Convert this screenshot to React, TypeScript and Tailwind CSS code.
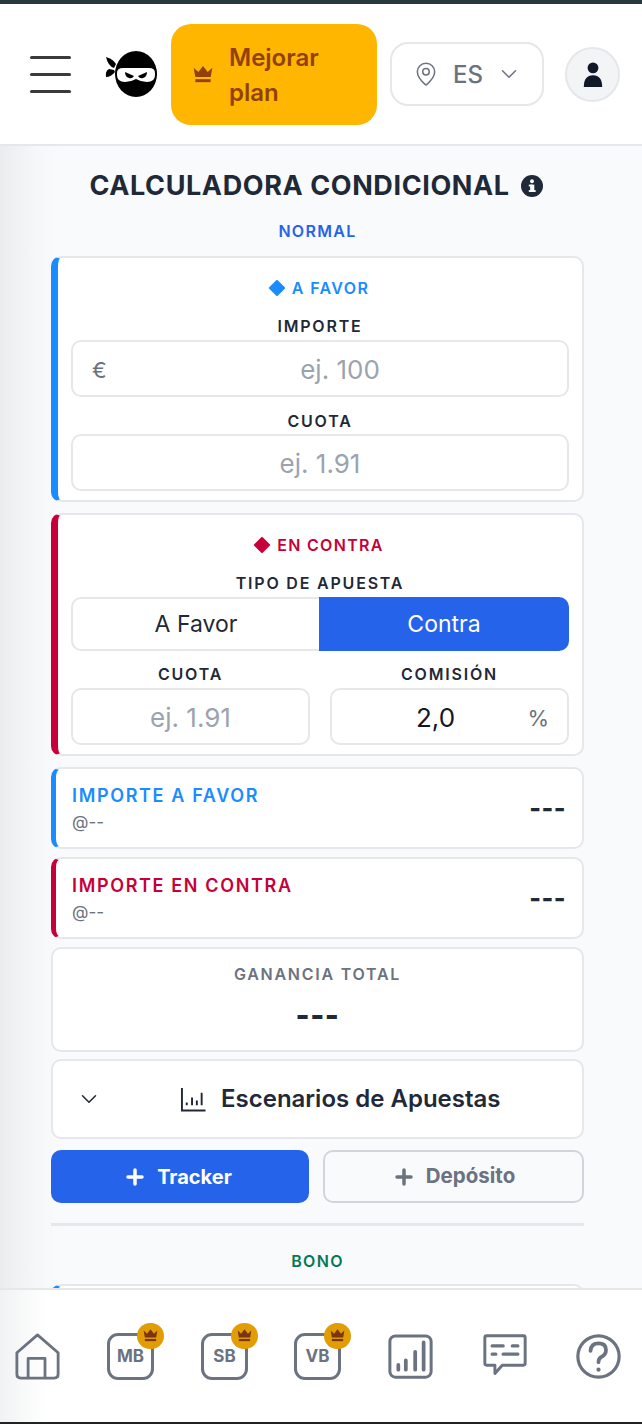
import React from 'react';
import { ChevronDown, MapPin, Plus } from 'lucide-react';

const Crown = ({ className }: { className: string }) => (
  <svg viewBox="0 0 24 20" className={className} fill="currentColor">
    <path d="M1 2l5.5 5L12 0l5.5 7L23 2l-2 11H3z" />
    <rect x="3" y="15.5" width="18" height="3.5" />
  </svg>
);

const Ninja = () => (
  <svg viewBox="0 0 52 48" className="w-[52px] h-[48px] shrink-0">
    <path d="M1 7 Q8 9 11 14 L9 18 Q3 16 1 7 Z" fill="#000" />
    <path d="M9 20 L10 22 Q6 27 1 27 Q0 21 4 19 Z" fill="#000" />
    <ellipse cx="31" cy="24" rx="21" ry="23" fill="#000" />
    <path d="M12 23 Q12 18 18 18 H44 Q50 18 50 23 V25 Q50 32 42 32 Q36 32 31 29 Q26 32 20 32 Q12 32 12 25 Z" fill="#fff" />
    <path d="M20 22 L29 26 Q27 29 24 28 Q20 27 20 22 Z M42 22 L33 26 Q35 29 38 28 Q42 27 42 22 Z" fill="#000" />
  </svg>
);

const Diamond = ({ className }: { className: string }) => (
  <span className={`w-[12px] h-[12px] rotate-45 rounded-[1px] ${className}`} />
);

const Label = ({ children }: { children: React.ReactNode }) => (
  <div className="text-[16px] leading-[20px] font-semibold tracking-[1.8px] text-[#1f2937] text-center">{children}</div>
);

const Field = ({ placeholder, className, children }: { placeholder: string; className?: string; children?: React.ReactNode }) => (
  <div className={`relative h-[57px] rounded-[10px] border-2 border-[#e5e7eb] bg-white flex items-center justify-center pt-[2px] text-[26px] text-[#9ca3af] ${className ?? ''}`}>
    {children}
    {placeholder}
  </div>
);

const ResultCard = ({ title, color }: { title: string; color: string }) => (
  <div className={`h-[82px] rounded-[10px] border-2 border-[#e5e7eb] border-l-[5px] ${color} bg-white flex items-center justify-between pl-[16px] pr-[16px]`}>
    <div>
      <div className="text-[18px] leading-[24px] font-semibold tracking-[1.65px]">{title}</div>
      <div className="text-[17px] leading-[20px] text-[#6b7280] mt-[4px]">@--</div>
    </div>
    <div className="text-[25px] font-extrabold text-[#1f2937] tracking-[0.5px] mt-[2px]">---</div>
  </div>
);

const BadgeTile = ({ text, className }: { text: string; className?: string }) => (
  <div className={`relative w-[47px] h-[47px] rounded-[11px] border-[3px] border-[#6b7280] flex items-center justify-center bg-white ${className ?? ''}`}>
    <span className="text-[17px] font-bold text-[#6b7280] mt-[1px]">{text}</span>
    <span className="absolute -top-[13px] -right-[13px] w-[27px] h-[26px] rounded-full bg-[#e29d05] flex items-center justify-center">
      <Crown className="w-[15px] h-[13px] text-[#78350f]" />
    </span>
  </div>
);

export default function App() {
  return (
    <div className="w-[642px] h-[1424px] flex flex-col overflow-hidden bg-white font-['Inter',sans-serif]">
      <div className="h-[4px] shrink-0 bg-[#27393f]" />

      <header className="h-[142px] shrink-0 bg-white border-b-2 border-[#e5e7eb] flex items-center pl-[30px]">
        <div className="w-[41px] flex flex-col gap-[14px] shrink-0">
          <span className="h-[3px] rounded-full bg-[#3a3a3a]" />
          <span className="h-[3px] rounded-full bg-[#3a3a3a]" />
          <span className="h-[3px] rounded-full bg-[#3a3a3a]" />
        </div>
        <div className="ml-[34px] w-[66px] shrink-0">
          <Ninja />
        </div>
        <button className="w-[206px] h-[101px] shrink-0 rounded-[20px] bg-[#ffb600] flex items-center pl-[21px] text-[#92400e]">
          <Crown className="w-[22px] h-[17px] mr-[15px] shrink-0" />
          <span className="text-[24px] leading-[35px] font-semibold text-left mt-[2px]">Mejorar<br />plan</span>
        </button>
        <div className="ml-[13px] w-[154px] h-[64px] shrink-0 rounded-[18px] border-2 border-[#e5e7eb] bg-white flex items-center pl-[21px] text-[#6b7280]">
          <MapPin size={26} strokeWidth={1.4} />
          <span className="ml-[14px] text-[24px] font-medium mt-[2px]">ES</span>
          <ChevronDown size={26} strokeWidth={1.4} className="ml-[13px]" />
        </div>
        <div className="ml-[21px] w-[55px] h-[55px] shrink-0 rounded-full border-2 border-[#e5e7eb] bg-[#f3f4f6] flex items-center justify-center">
          <svg viewBox="0 0 24 30" className="w-[20px] h-[29px]" fill="#111827">
            <circle cx="12" cy="7" r="6.5" />
            <path d="M1 30 Q1 16 12 16 Q23 16 23 30 Z" />
          </svg>
        </div>
      </header>

      <main className="flex-1 min-h-0 overflow-hidden bg-[#f9fafb] bg-[linear-gradient(to_right,#ebecee,#f6f7f9_36px,#f9fafb_60px)] px-[51px] pt-[21px]">
        <div className="w-[533px]">
          <h1 className="flex items-center justify-center gap-[11px] h-[38px] pr-[3px] text-[27px] font-bold tracking-[0.6px] text-[#1f2937]">
            CALCULADORA CONDICIONAL
            <svg viewBox="0 0 24 24" className="w-[22px] h-[22px] shrink-0">
              <circle cx="12" cy="12" r="12" fill="#1f2937" />
              <rect x="10" y="10.5" width="4.5" height="7.5" fill="#fff" />
              <rect x="8.5" y="16.5" width="7.5" height="2" fill="#fff" />
              <rect x="8.5" y="10.5" width="4" height="2" fill="#fff" />
              <circle cx="12" cy="6.8" r="2.1" fill="#fff" />
            </svg>
          </h1>
          <div className="mt-[14px] text-center text-[16px] leading-[24px] font-semibold tracking-[1.3px] text-[#2563eb]">NORMAL</div>

          <section className="mt-[13px] h-[246px] rounded-[10px] border-2 border-[#e5e7eb] border-l-[7px] border-l-[#1a8cff] bg-white pl-[13px] pr-[13px] pt-[19px]">
            <div className="flex items-center justify-center gap-[9px] h-[22px] text-[16px] font-semibold tracking-[1.4px] text-[#1a8cff]">
              <Diamond className="bg-[#1a8cff]" />
              A FAVOR
            </div>
            <div className="mt-[17px]"><Label>IMPORTE</Label></div>
            <div className="mt-[4px]">
              <Field placeholder="ej. 100" className="pl-[40px]">
                <span className="absolute left-[19px] top-[12px] text-[22px] text-[#6b7280]">€</span>
              </Field>
            </div>
            <div className="mt-[14px]"><Label>CUOTA</Label></div>
            <div className="mt-[3px]"><Field placeholder="ej. 1.91" /></div>
          </section>

          <section className="mt-[11px] h-[243px] rounded-[10px] border-2 border-[#e5e7eb] border-l-[7px] border-l-[#c70039] bg-white pl-[13px] pr-[13px] pt-[19px]">
            <div className="flex items-center justify-center gap-[9px] h-[22px] text-[16px] font-semibold tracking-[1.3px] text-[#c70039]">
              <Diamond className="bg-[#c70039]" />
              EN CONTRA
            </div>
            <div className="mt-[17px]"><Label>TIPO DE APUESTA</Label></div>
            <div className="mt-[4px] h-[54px] flex text-[23px]">
              <div className="w-[248px] rounded-l-[10px] border-2 border-r-0 border-[#e5e7eb] bg-white text-[#1f2937] flex items-center justify-center">A Favor</div>
              <div className="flex-1 rounded-r-[10px] bg-[#2563eb] text-white flex items-center justify-center">Contra</div>
            </div>
            <div className="mt-[13px] grid grid-cols-2 gap-[20px]">
              <div>
                <Label>CUOTA</Label>
                <div className="mt-[4px]"><Field placeholder="ej. 1.91" /></div>
              </div>
              <div>
                <Label>COMISIÓN</Label>
                <div className="mt-[4px]">
                  <Field placeholder="">
                    <span className="text-[#111827] mr-[28px]">2,0</span>
                    <span className="absolute right-[18px] top-[12px] text-[22px] text-[#6b7280]">%</span>
                  </Field>
                </div>
              </div>
            </div>
          </section>

          <div className="mt-[11px] flex flex-col gap-[8px]">
            <ResultCard title="IMPORTE A FAVOR" color="border-l-[#1a8cff] text-[#1a8cff]" />
            <ResultCard title="IMPORTE EN CONTRA" color="border-l-[#c70039] text-[#c70039]" />
            <div className="h-[105px] rounded-[10px] border-2 border-[#e5e7eb] bg-white flex flex-col items-center pt-[13px]">
              <div className="text-[16px] leading-[24px] font-semibold tracking-[1.75px] text-[#6b7280]">GANANCIA TOTAL</div>
              <div className="mt-[9px] text-[30px] leading-[40px] font-extrabold text-[#1f2937] tracking-[0.5px]">---</div>
            </div>
          </div>

          <div className="mt-[7px] h-[80px] rounded-[10px] border-2 border-[#e5e7eb] bg-white flex items-center pl-[23px]">
            <ChevronDown size={26} strokeWidth={1.4} className="text-[#1f2937]" />
            <svg viewBox="0 0 26 26" className="ml-[78px] w-[26px] h-[25px]" fill="none" stroke="#1f2937" strokeWidth="2">
              <path d="M1.5 1v23.5H26" />
              <path d="M6.5 19v-3M12 19v-8M17 19v-5M22 19V6" />
            </svg>
            <span className="ml-[15px] text-[24px] font-semibold text-[#1f2937]">Escenarios de Apuestas</span>
          </div>

          <div className="mt-[11px] grid grid-cols-[258px_261px] gap-[14px]">
            <button className="h-[53px] rounded-[10px] bg-[#2563eb] text-white flex items-center justify-center gap-[10px] text-[20px] font-bold">
              <Plus size={24} strokeWidth={3.5} className="-ml-[5px]" />
              Tracker
            </button>
            <button className="h-[53px] rounded-[10px] border-2 border-[#d1d5db] bg-[#f9fafb] text-[#6b7280] flex items-center justify-center gap-[10px] text-[20.5px] font-bold">
              <Plus size={24} strokeWidth={3.5} />
              Depósito
            </button>
          </div>

          <div className="mt-[20px] h-[3px] bg-[#e5e7eb]" />
          <div className="mt-[23px] text-center text-[16px] leading-[24px] font-semibold tracking-[1.3px] text-[#047857]">BONO</div>
          <div className="mt-[11px] h-[60px] rounded-[10px] border-2 border-[#e5e7eb] border-l-[7px] border-l-[#1a8cff] bg-white" />
        </div>
      </main>

      <nav className="h-[134px] shrink-0 border-t-2 border-[#e5e7eb] bg-white bg-[linear-gradient(to_right,#f1f2f3,#ffffff_45px)] flex items-center gap-[47px] pl-[15px] text-[#6b7280]">
        <svg viewBox="0 0 48 50" className="w-[45px] h-[49px] shrink-0" fill="none" stroke="currentColor" strokeWidth="3" strokeLinejoin="round">
          <path d="M24 2 L46 21 V44 Q46 48 42 48 H6 Q2 48 2 44 V21 Z" />
          <path d="M14 48 V27 H32 V48" />
        </svg>
        <BadgeTile text="MB" />
        <BadgeTile text="SB" />
        <BadgeTile text="VB" className="-ml-[1px]" />
        <svg viewBox="0 0 48 48" className="w-[45px] h-[45px] shrink-0" fill="none" stroke="currentColor" strokeWidth="3.2" strokeLinecap="round">
          <rect x="2" y="2" width="44" height="44" rx="6" />
          <path d="M11 38v-5M19 38V28M29 38V19M38 38V9" strokeWidth="4" />
        </svg>
        <svg viewBox="0 0 48 48" className="ml-[3px] w-[44px] h-[44px] shrink-0" fill="none" stroke="currentColor" strokeWidth="3.2" strokeLinecap="round" strokeLinejoin="round">
          <path d="M4 2 H44 Q46 2 46 4 V32 Q46 34 44 34 H21 L13 43 V34 H4 Q2 34 2 32 V4 Q2 2 4 2 Z" />
          <path d="M10 13H22M32 13H38M10 22H14M22 22H38" strokeWidth="3.6" />
        </svg>
        <svg viewBox="0 0 48 48" className="ml-[2px] w-[45px] h-[45px] shrink-0" fill="none" stroke="currentColor" strokeWidth="3.4" strokeLinecap="round">
          <circle cx="24" cy="24" r="22" />
          <path d="M15.5 18 Q16 10 24 10 Q32 10 32 17 Q32 22 27 24.5 Q24 26 24 30" strokeWidth="4" />
          <circle cx="24" cy="38" r="1.5" fill="currentColor" strokeWidth="1.5" />
        </svg>
      </nav>
      <div className="h-[2px] shrink-0 bg-[#1f2326]" />
    </div>
  );
}
